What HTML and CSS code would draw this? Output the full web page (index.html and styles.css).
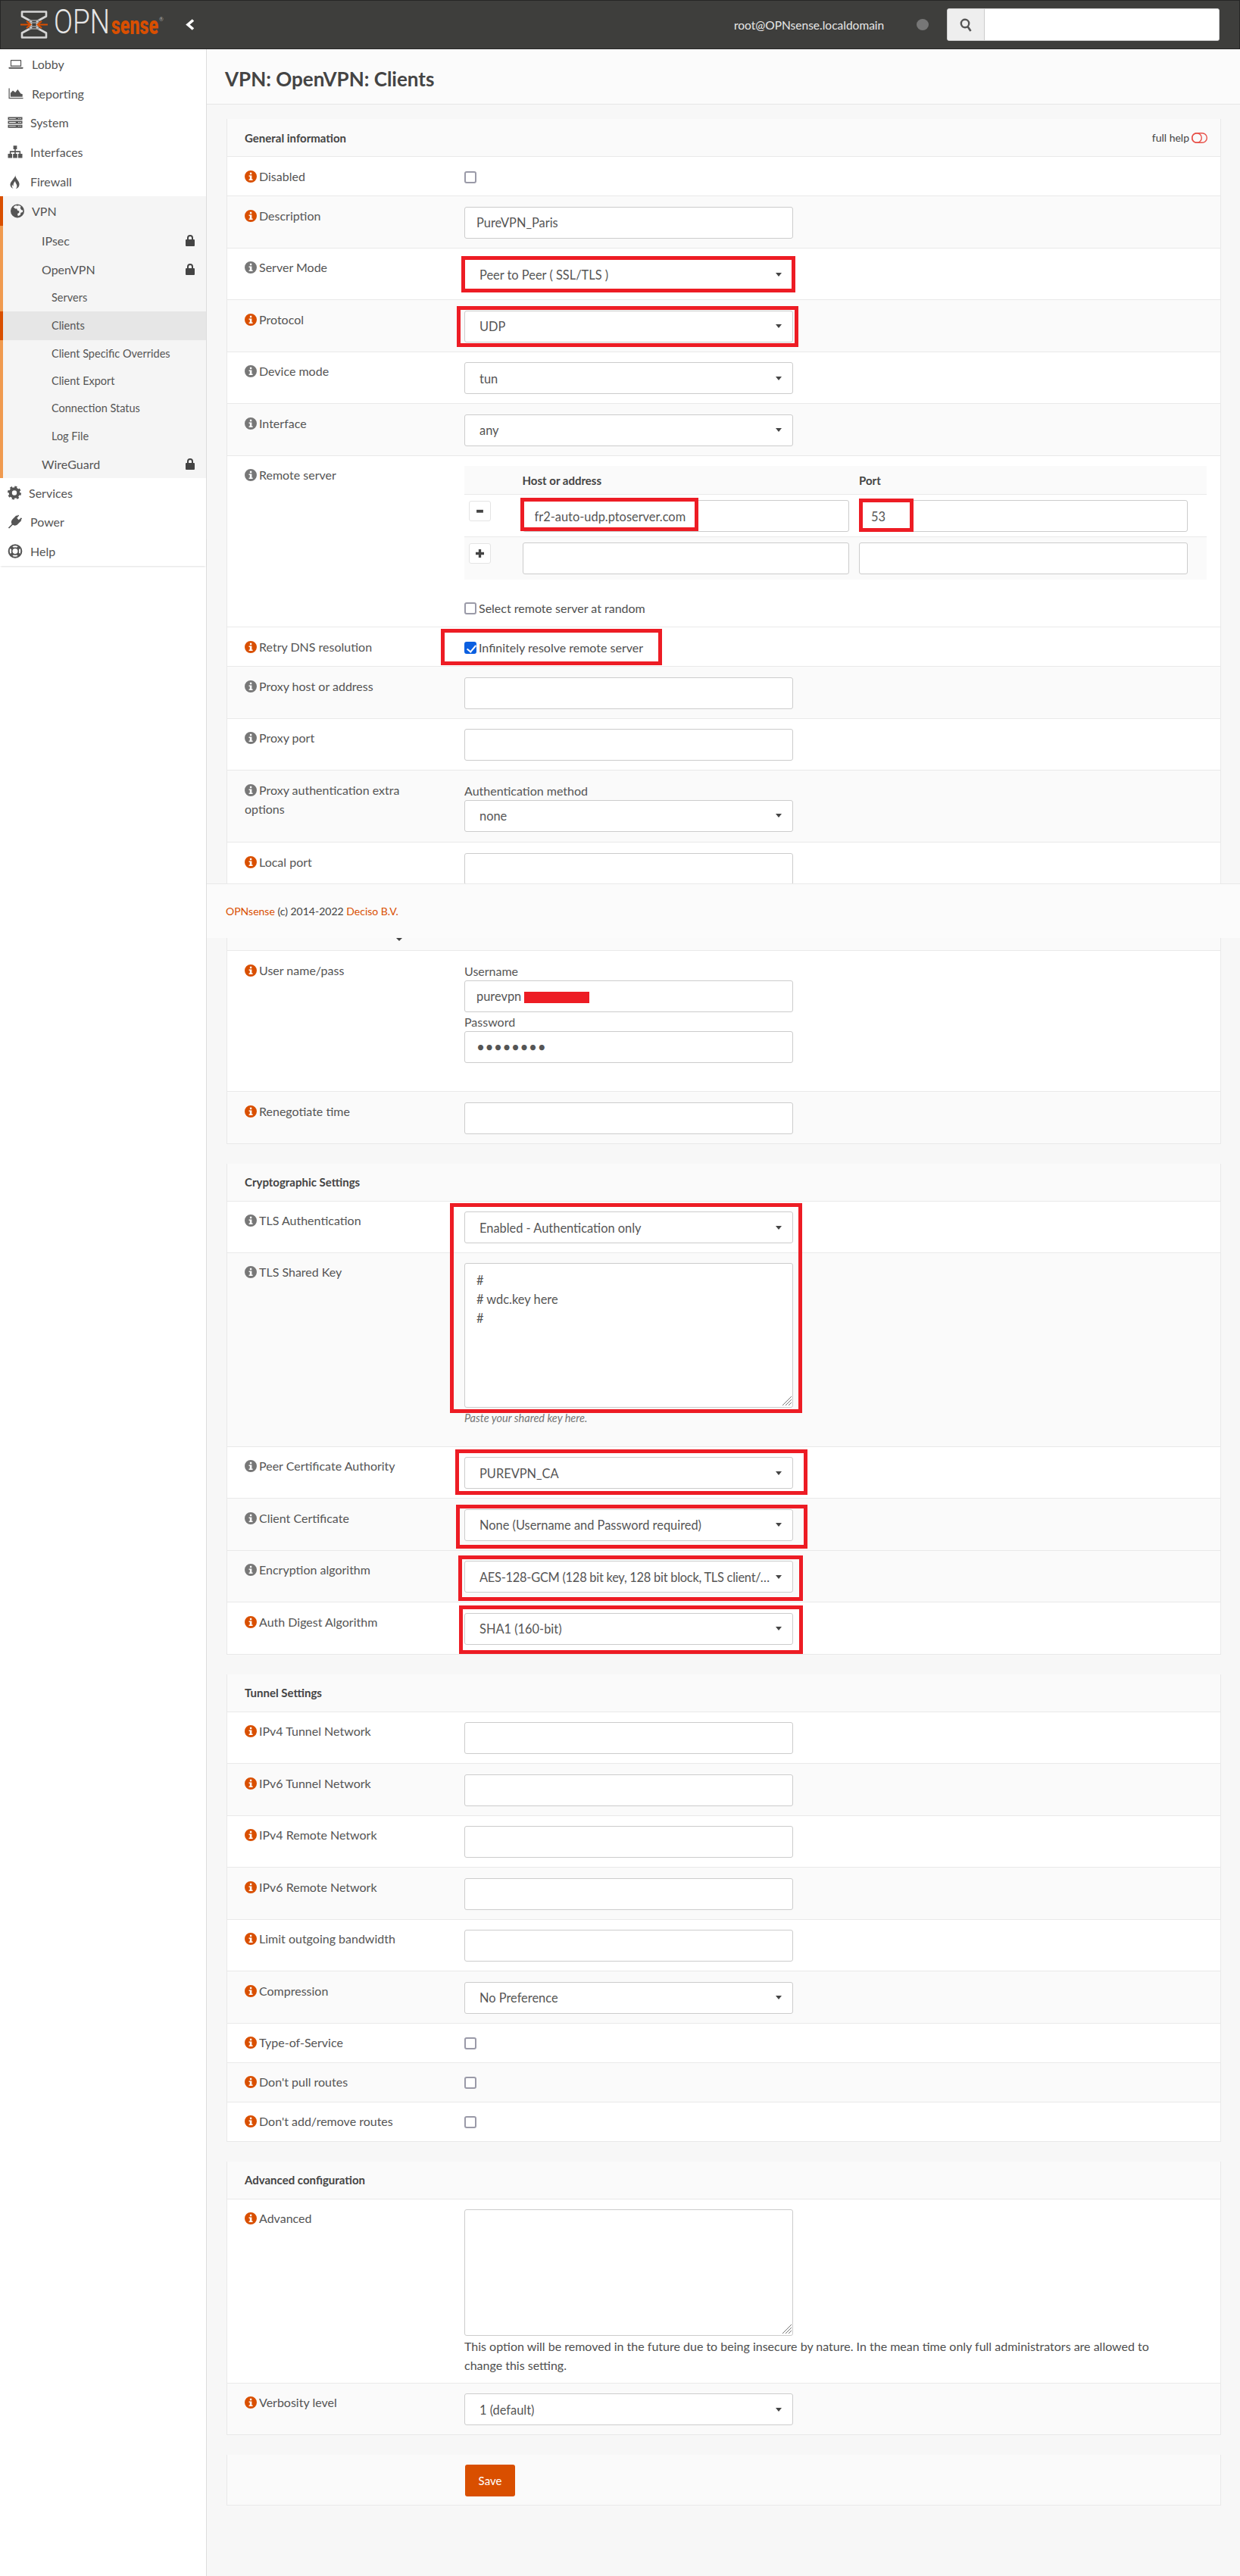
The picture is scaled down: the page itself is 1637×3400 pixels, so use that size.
FILE: index.html
```html
<!DOCTYPE html>
<html lang="en">
<head>
    <meta charset="UTF-8">
    <title>VPN: OpenVPN: Clients | OPNsense</title>
    <link rel="stylesheet" href="styles.css">
</head>
<body>
    <svg class="defs" aria-hidden="true">
        <symbol id="i-info" viewBox="0 0 16 16">
            <path fill-rule="evenodd" d="M8 0a8 8 0 1 1 0 16A8 8 0 0 1 8 0zM6.900 2.800v2.500h2.400V2.800zM5.600 6.400v1.500h1.200v3.600H5.600V13h5v-1.500H9.400V6.400z"/>
        </symbol>
        <symbol id="i-lock" viewBox="0 0 12 15">
            <path fill-rule="evenodd" d="M1 6h1V4a4 4 0 0 1 8 0v2h1a1 1 0 0 1 1 1v7a1 1 0 0 1-1 1H1a1 1 0 0 1-1-1V7a1 1 0 0 1 1-1zm3 0h4V4a2 2 0 0 0-4 0z"/>
        </symbol>
        <symbol id="i-resize" viewBox="0 0 12 12">
            <path d="M0 12 12 0M4 12l8-8M8 12l4-4" fill="none" stroke="#777" stroke-width="1"/>
        </symbol>
    </svg>

    <header class="topbar">
        <a class="logo" href="#">
            <svg class="logo-mark" viewBox="0 0 36 37">
                <path d="M2 1.500h32v6L22 14v9l12 6.500v6H2v-6L14 23v-9L2 7.500z" fill="none" stroke="#d6d6d6" stroke-width="2.600" stroke-linejoin="round"/>
                <path d="M11 13h14M11 16h14M11 21h14M11 24h14" stroke="#9a9a9a" stroke-width="1.600"/>
                <path d="M0 18.500h13M36 18.500H23M8 14l5.500 4.500L8 23M28 14l-5.500 4.500L28 23" fill="none" stroke="#d94f00" stroke-width="2"/>
            </svg>
            <svg class="logo-type" viewBox="0 -8 150 60">
                <text class="logo-opn" x="0" y="33" textLength="74" lengthAdjust="spacingAndGlyphs">OPN</text>
                <text class="logo-sense" x="76" y="34" textLength="62" lengthAdjust="spacingAndGlyphs">sense</text>
                <text class="logo-reg" x="139" y="17">®</text>
            </svg>
        </a>
        <svg class="collapse" viewBox="0 0 12 15"><path d="M10 1.500 3 7.500l7 6" fill="none" stroke="#fff" stroke-width="3.600"/></svg>
        <div class="topbar-right">
            <span class="user">root@OPNsense.localdomain</span>
            <span class="status-dot"></span>
            <div class="search">
                <span class="search-addon">
                    <svg viewBox="0 0 16 18"><circle cx="7" cy="7" r="5.200" fill="none" stroke="#555" stroke-width="2.400"/><path d="m10.500 11 4 6" stroke="#555" stroke-width="2.600"/></svg>
                </span>
                <input class="search-input" type="text">
            </div>
        </div>
    </header>

    <div class="layout">
        <nav class="sidebar">
            <a class="nav-item" href="#">
                <svg class="nav-icon wide" viewBox="0 0 24 24"><path fill-rule="evenodd" d="M4 5h16a1 1 0 0 1 1 1v10H3V6a1 1 0 0 1 1-1zm.500 1.500v8h15v-8zM0 17.500h24V19a1 1 0 0 1-1 1H1a1 1 0 0 1-1-1z"/></svg>
                Lobby
            </a>
            <a class="nav-item" href="#">
                <svg class="nav-icon wide" viewBox="0 0 24 24"><path d="M0 3h1.500v16H24v1.500H0zM3 17.500V11l4-4 4 3 4-5 5 7 3 1v4.500z"/></svg>
                Reporting
            </a>
            <a class="nav-item" href="#">
                <svg class="nav-icon" viewBox="0 0 24 24"><path fill-rule="evenodd" d="M0 3h24v5H0zm0 6.500h24v5H0zM0 16h24v5H0zM2 5v1h11V5zm15 0v1h2V5zm3 0v1h2V5zM2 11.500v1h11v-1zm15 0v1h2v-1zm3 0v1h2v-1zM2 18v1h11v-1zm15 0v1h2v-1zm3 0v1h2v-1z"/></svg>
                System
            </a>
            <a class="nav-item" href="#">
                <svg class="nav-icon" viewBox="0 0 24 24"><path d="M9 1.500h6v6h-2v3h8v5h-2v-3h-6v3h-2v-3H5v3H3v-5h8v-3H9zM0 15h7v7H0zm8.500 0h7v7h-7zM17 15h7v7h-7z"/></svg>
                Interfaces
            </a>
            <a class="nav-item" href="#">
                <svg class="nav-icon" viewBox="0 0 24 24"><path d="M12 0c1 4-2 6-4 9-2 3-5 5-4 10 .500 2.500 2.500 4 5 5-2-2-3-4-2-7 .500 2 1.500 2.500 2 2.500-.500-3 1-6 3-8 0 3 3 5 3 8 0 2-1 4-2 5 3-1 6-3 6-8 0-6-6-8-7-16z"/></svg>
                Firewall
            </a>
            <div class="nav-group">
                <a class="nav-item open" href="#">
                    <svg class="nav-icon narrow" viewBox="0 0 24 24"><path fill-rule="evenodd" d="M12 0a12 12 0 1 1 0 24 12 12 0 0 1 0-24zM5 5l3 3h3l1 3 3 1v3l-3 2 1 4 4-2 1-4 3-1 1-3-3-1-2-3 1-3-3-2-3 1-3-1z"/></svg>
                    VPN
                </a>
                <a class="nav-sub" href="#">IPsec <svg class="lock"><use href="#i-lock"/></svg></a>
                <a class="nav-sub" href="#">OpenVPN <svg class="lock"><use href="#i-lock"/></svg></a>
                <a class="nav-leaf" href="#">Servers</a>
                <a class="nav-leaf active" href="#">Clients</a>
                <a class="nav-leaf" href="#">Client Specific Overrides</a>
                <a class="nav-leaf" href="#">Client Export</a>
                <a class="nav-leaf" href="#">Connection Status</a>
                <a class="nav-leaf last" href="#">Log File</a>
                <a class="nav-sub last" href="#">WireGuard <svg class="lock"><use href="#i-lock"/></svg></a>
            </div>
            <a class="nav-item" href="#">
                <svg class="nav-icon narrow" viewBox="0 0 24 24"><circle cx="12" cy="12" r="7" fill="none" stroke="currentColor" stroke-width="5.500"/><circle cx="12" cy="12" r="10.500" fill="none" stroke="currentColor" stroke-width="3" stroke-dasharray="4.200 4.050"/></svg>
                Services
            </a>
            <a class="nav-item" href="#">
                <svg class="nav-icon" viewBox="0 0 24 24"><path d="M15 2.500 17 .5l1.500 1.500-3.500 4 3 3 4-3.500L23.500 7l-2 2 1 1-6 6c-3 3-6 3-8.500 1.500L2 23.500.5 22l6-6C5 13.500 5 10.500 8 7.500l6-6z"/></svg>
                Power
            </a>
            <a class="nav-item help" href="#">
                <svg class="nav-icon" viewBox="0 0 24 24"><circle cx="12" cy="12" r="10.500" fill="none" stroke="currentColor" stroke-width="2.600"/><circle cx="12" cy="12" r="5.500" fill="none" stroke="currentColor" stroke-width="2.200"/><path d="m4.500 4.500 4 4m7 7 4 4m0-15-4 4m-7 7-4 4" stroke="currentColor" stroke-width="5"/></svg>
                Help
            </a>
        </nav>

        <main class="main">
            <div class="page-title"><h1>VPN: OpenVPN: Clients</h1></div>

            <section class="panel first">
                <div class="panel-head">
                    General information
                    <span class="full-help">full help
                        <svg viewBox="0 0 21 14"><rect x=".7" y=".7" width="19.600" height="12.600" rx="6.300" fill="none" stroke="#e8524a" stroke-width="1.400"/><circle cx="7" cy="7" r="6.300" fill="none" stroke="#e8524a" stroke-width="1.400"/></svg>
                    </span>
                </div>
                <div class="row check-row">
                    <div class="lbl"><svg class="info warn"><use href="#i-info"/></svg>Disabled</div>
                    <div class="val"><input class="check" type="checkbox"></div>
                </div>
                <div class="row alt">
                    <div class="lbl"><svg class="info warn"><use href="#i-info"/></svg>Description</div>
                    <div class="val"><input class="text" type="text" value="PureVPN_Paris"></div>
                </div>
                <div class="row">
                    <div class="lbl"><svg class="info"><use href="#i-info"/></svg>Server Mode</div>
                    <div class="val"><div class="select"><span>Peer to Peer ( SSL/TLS )</span><i class="caret"></i></div></div>
                </div>
                <div class="row alt">
                    <div class="lbl"><svg class="info warn"><use href="#i-info"/></svg>Protocol</div>
                    <div class="val"><div class="select"><span>UDP</span><i class="caret"></i></div></div>
                </div>
                <div class="row">
                    <div class="lbl"><svg class="info"><use href="#i-info"/></svg>Device mode</div>
                    <div class="val"><div class="select"><span>tun</span><i class="caret"></i></div></div>
                </div>
                <div class="row alt">
                    <div class="lbl"><svg class="info"><use href="#i-info"/></svg>Interface</div>
                    <div class="val"><div class="select"><span>any</span><i class="caret"></i></div></div>
                </div>
                <div class="row remote-row">
                    <div class="lbl"><svg class="info"><use href="#i-info"/></svg>Remote server</div>
                    <div class="val wide">
                        <div class="remote-head"><span class="col-host">Host or address</span><span class="col-port">Port</span></div>
                        <div class="remote-line">
                            <button class="mini" type="button"><svg viewBox="0 0 10 10"><rect x="1" y="3.500" width="8" height="3.500"/></svg></button>
                            <input class="text host" type="text" value="fr2-auto-udp.ptoserver.com">
                            <input class="text port" type="text" value="53">
                        </div>
                        <div class="remote-line alt">
                            <button class="mini" type="button"><svg viewBox="0 0 10 10"><path d="M3.500 0h3v3.500H10v3H6.500V10h-3V6.500H0v-3h3.500z"/></svg></button>
                            <input class="text host" type="text">
                            <input class="text port" type="text">
                        </div>
                        <label class="check-label random"><input class="check" type="checkbox">Select remote server at random</label>
                    </div>
                </div>
                <div class="row check-row">
                    <div class="lbl"><svg class="info warn"><use href="#i-info"/></svg>Retry DNS resolution</div>
                    <div class="val"><label class="check-label"><input class="check" type="checkbox" checked>Infinitely resolve remote server</label></div>
                </div>
                <div class="row alt">
                    <div class="lbl"><svg class="info"><use href="#i-info"/></svg>Proxy host or address</div>
                    <div class="val"><input class="text" type="text"></div>
                </div>
                <div class="row">
                    <div class="lbl"><svg class="info"><use href="#i-info"/></svg>Proxy port</div>
                    <div class="val"><input class="text" type="text"></div>
                </div>
                <div class="row alt proxy-row">
                    <div class="lbl"><svg class="info"><use href="#i-info"/></svg>Proxy authentication extra options</div>
                    <div class="val">
                        <div class="field-title">Authentication method</div>
                        <div class="select"><span>none</span><i class="caret"></i></div>
                    </div>
                </div>
                <div class="row">
                    <div class="lbl"><svg class="info warn"><use href="#i-info"/></svg>Local port</div>
                    <div class="val"><input class="text" type="text"></div>
                </div>
                <div class="row alt hidden-row"><i class="peek"></i></div>
                <div class="row user-row">
                    <div class="lbl"><svg class="info warn"><use href="#i-info"/></svg>User name/pass</div>
                    <div class="val">
                        <div class="field-title">Username</div>
                        <input class="text" type="text" value="purevpn">
                        <div class="field-title second">Password</div>
                        <input class="text secret" type="password" value="password">
                    </div>
                </div>
                <div class="row alt">
                    <div class="lbl"><svg class="info warn"><use href="#i-info"/></svg>Renegotiate time</div>
                    <div class="val"><input class="text" type="text"></div>
                </div>
            </section>

            <section class="panel">
                <div class="panel-head">Cryptographic Settings</div>
                <div class="row tls-row">
                    <div class="lbl"><svg class="info"><use href="#i-info"/></svg>TLS Authentication</div>
                    <div class="val"><div class="select"><span>Enabled - Authentication only</span><i class="caret"></i></div></div>
                </div>
                <div class="row alt key-row">
                    <div class="lbl"><svg class="info"><use href="#i-info"/></svg>TLS Shared Key</div>
                    <div class="val">
                        <div class="area-wrap">
                            <textarea class="area key"># 
# wdc.key here
# </textarea>
                            <svg class="resizer"><use href="#i-resize"/></svg>
                        </div>
                        <div class="hint">Paste your shared key here.</div>
                    </div>
                </div>
                <div class="row">
                    <div class="lbl"><svg class="info"><use href="#i-info"/></svg>Peer Certificate Authority</div>
                    <div class="val"><div class="select"><span>PUREVPN_CA</span><i class="caret"></i></div></div>
                </div>
                <div class="row alt">
                    <div class="lbl"><svg class="info"><use href="#i-info"/></svg>Client Certificate</div>
                    <div class="val"><div class="select"><span>None (Username and Password required)</span><i class="caret"></i></div></div>
                </div>
                <div class="row alt">
                    <div class="lbl"><svg class="info"><use href="#i-info"/></svg>Encryption algorithm</div>
                    <div class="val"><div class="select tight"><span>AES-128-GCM (128 bit key, 128 bit block, TLS client/server)</span><i class="caret"></i></div></div>
                </div>
                <div class="row">
                    <div class="lbl"><svg class="info warn"><use href="#i-info"/></svg>Auth Digest Algorithm</div>
                    <div class="val"><div class="select"><span>SHA1 (160-bit)</span><i class="caret"></i></div></div>
                </div>
            </section>

            <section class="panel">
                <div class="panel-head">Tunnel Settings</div>
                <div class="row">
                    <div class="lbl"><svg class="info warn"><use href="#i-info"/></svg>IPv4 Tunnel Network</div>
                    <div class="val"><input class="text" type="text"></div>
                </div>
                <div class="row alt">
                    <div class="lbl"><svg class="info warn"><use href="#i-info"/></svg>IPv6 Tunnel Network</div>
                    <div class="val"><input class="text" type="text"></div>
                </div>
                <div class="row">
                    <div class="lbl"><svg class="info warn"><use href="#i-info"/></svg>IPv4 Remote Network</div>
                    <div class="val"><input class="text" type="text"></div>
                </div>
                <div class="row alt">
                    <div class="lbl"><svg class="info warn"><use href="#i-info"/></svg>IPv6 Remote Network</div>
                    <div class="val"><input class="text" type="text"></div>
                </div>
                <div class="row">
                    <div class="lbl"><svg class="info warn"><use href="#i-info"/></svg>Limit outgoing bandwidth</div>
                    <div class="val"><input class="text" type="text"></div>
                </div>
                <div class="row alt">
                    <div class="lbl"><svg class="info warn"><use href="#i-info"/></svg>Compression</div>
                    <div class="val"><div class="select"><span>No Preference</span><i class="caret"></i></div></div>
                </div>
                <div class="row check-row">
                    <div class="lbl"><svg class="info warn"><use href="#i-info"/></svg>Type-of-Service</div>
                    <div class="val"><input class="check" type="checkbox"></div>
                </div>
                <div class="row check-row alt">
                    <div class="lbl"><svg class="info warn"><use href="#i-info"/></svg>Don't pull routes</div>
                    <div class="val"><input class="check" type="checkbox"></div>
                </div>
                <div class="row check-row">
                    <div class="lbl"><svg class="info warn"><use href="#i-info"/></svg>Don't add/remove routes</div>
                    <div class="val"><input class="check" type="checkbox"></div>
                </div>
            </section>

            <section class="panel">
                <div class="panel-head">Advanced configuration</div>
                <div class="row advanced-row">
                    <div class="lbl"><svg class="info warn"><use href="#i-info"/></svg>Advanced</div>
                    <div class="val wide">
                        <div class="area-wrap">
                            <textarea class="area tall"></textarea>
                            <svg class="resizer"><use href="#i-resize"/></svg>
                        </div>
                        <p class="note">This option will be removed in the future due to being insecure by nature. In the mean time only full administrators are allowed to change this setting.</p>
                    </div>
                </div>
                <div class="row alt">
                    <div class="lbl"><svg class="info warn"><use href="#i-info"/></svg>Verbosity level</div>
                    <div class="val"><div class="select"><span>1 (default)</span><i class="caret"></i></div></div>
                </div>
            </section>

            <section class="panel save-panel">
                <button class="save" type="button">Save</button>
            </section>
        </main>
    </div>

    <footer class="page-footer"><a href="#">OPNsense</a> (c) 2014-2022 <a href="#">Deciso B.V.</a></footer>

    <!-- hand drawn red marks over the screenshot -->
    <div class="mark mark-mode"></div>
    <div class="mark mark-proto"></div>
    <div class="mark mark-host"></div>
    <div class="mark mark-port"></div>
    <div class="mark mark-retry"></div>
    <div class="mark mark-tls"></div>
    <div class="mark mark-peer"></div>
    <div class="mark mark-client"></div>
    <div class="mark mark-enc"></div>
    <div class="mark mark-auth"></div>
    <div class="redact"></div>
</body>
</html>
```

FILE: styles.css
```css
* {
    box-sizing: border-box;
}
body {
    margin: 0;
    min-height: 3400px;
    background-color: #f7f7f7;
    color: #4f4f4f;
    font-family: "Lato", "Noto Sans", sans-serif;
    font-size: 16px;
}
a {
    color: inherit;
    text-decoration: none;
}
.defs {
    display: none;
}

/* top bar */
.topbar {
    display: flex;
    align-items: center;
    height: 65px;
    padding: 0 26px 0 26px;
    background-color: #3e3e3c;
    border: 1px solid #262626;
}
.logo {
    display: flex;
    align-items: center;
    gap: 8px;
    width: 218px;
}
.logo-mark {
    width: 36px;
    height: 37px;
}
.logo-type {
    width: 150px;
    height: 60px;
    overflow: visible;
}
.logo-opn {
    font-family: "Roboto", sans-serif;
    font-weight: 300;
    font-size: 45px;
    fill: #e6e6e6;
}
.logo-sense {
    font-family: "Roboto", sans-serif;
    font-weight: 900;
    font-size: 33px;
    fill: #d94f00;
}
.logo-reg {
    font-size: 7px;
    fill: #aaa;
}
.collapse {
    width: 12px;
    height: 15px;
}
.topbar-right {
    display: flex;
    align-items: center;
    margin-left: auto;
}
.user {
    width: 216px;
    color: #e8e8e8;
    font-size: 15.5px;
    white-space: nowrap;
}
.status-dot {
    width: 16px;
    height: 15px;
    margin: 0 24px 0 25px;
    border-radius: 50%;
    background-color: #777;
}
.search {
    display: flex;
    width: 360px;
    height: 43px;
    background: #fff;
    border: 1px solid #ccc;
    border-radius: 3px;
    overflow: hidden;
}
.search-addon {
    display: flex;
    align-items: center;
    justify-content: center;
    width: 49px;
    background-color: #eee;
    border-right: 1px solid #ccc;
}
.search-addon svg {
    width: 16px;
    height: 18px;
}
.search-input {
    flex: 1;
    border: 0;
    min-width: 0;
}

/* sidebar */
.layout {
    display: flex;
    align-items: stretch;
    min-height: 3335px;
}
.sidebar {
    flex: none;
    width: 273px;
    background-color: #fff;
    border-right: 1px solid #ddd;
    color: #555;
}
.nav-item {
    display: flex;
    align-items: center;
    height: 38.8px;
    padding-left: 10px;
    font-size: 16px;
}
.nav-icon {
    flex: none;
    width: 20px;
    height: 19px;
    margin-right: 10px;
    fill: currentColor;
}
.nav-icon.wide {
    width: 22px;
}
.nav-icon.narrow {
    width: 18px;
    margin-right: 10px;
}
.nav-group {
    background-color: #f5f5f5;
    border-left: 4px solid #f09a4f;
}
.nav-item.open {
    margin-left: -4px;
    border-left: 4px solid #d94f00;
    padding-left: 10px;
}
.nav-sub {
    display: flex;
    align-items: center;
    justify-content: space-between;
    height: 38.5px;
    padding: 0 15px 0 51px;
}
.nav-sub.last {
    height: 37px;
}
.lock {
    width: 12px;
    height: 15px;
    fill: #444;
}
.nav-leaf {
    display: flex;
    align-items: center;
    height: 36px;
    padding-left: 64px;
    font-size: 14.5px;
}
.nav-leaf.active {
    height: 38px;
    margin-left: -4px;
    background-color: #e6e6e6;
    border-left: 4px solid #d94f00;
}
.nav-leaf.last {
    height: 37px;
}
.nav-item.help {
    height: 39px;
    box-shadow: 0 2px 2px -1px rgba(0, 0, 0, 0.12);
}

/* page */
.main {
    flex: 1;
    min-width: 0;
}
.page-title {
    display: flex;
    align-items: center;
    height: 73px;
    padding: 6px 0 0 24px;
    background-color: #fbfbfb;
    border-bottom: 1px solid #e6e6e6;
}
.page-title h1 {
    margin: 0;
    color: #444;
    font-size: 26px;
    font-weight: 700;
}
.panel {
    margin: 26px 25px 0 26px;
    background-color: #fff;
    border: 1px solid #e9e9e9;
    border-width: 0 1px;
}
.panel.first {
    margin-top: 19px;
}
.panel-head {
    display: flex;
    align-items: center;
    justify-content: space-between;
    height: 50px;
    padding: 0 17px 0 23px;
    background-color: #fafafa;
    border-bottom: 1px solid #e9e9e9;
    color: #444;
    font-size: 15px;
    font-weight: 700;
}
.full-help {
    display: flex;
    align-items: center;
    gap: 3px;
    font-size: 14px;
    font-weight: 400;
}
.full-help svg {
    width: 21px;
    height: 14px;
}

/* form rows */
.row {
    position: relative;
    display: flex;
    align-items: flex-start;
    height: 68.5px;
    padding: 13.5px 0 0 23px;
    background-color: #fff;
    border-bottom: 1px solid #e9e9e9;
}
.row.alt {
    background-color: #fafafa;
}
.check-row {
    height: 52px;
}
.remote-row {
    height: 226.5px;
}
.proxy-row {
    height: 95px;
}
.hidden-row {
    height: 74.5px;
}
.user-row {
    height: 186px;
}
.tls-row {
    height: 68px;
}
.key-row {
    height: 256px;
}
.advanced-row {
    height: 243px;
    padding-top: 13px;
}
.lbl {
    flex: none;
    width: 290px;
    margin-top: -1px;
    padding-right: 30px;
    line-height: 25px;
    color: #555;
}
.info {
    width: 16px;
    height: 16px;
    margin-right: 3px;
    vertical-align: -2px;
    fill: #777;
}
.info.warn {
    fill: #d94f00;
}
.val {
    width: 434px;
}
.val.wide {
    width: 980px;
}
.text,
.select,
.area {
    display: block;
    width: 434px;
    background-color: #fff;
    border: 1px solid #ccc;
    border-radius: 3px;
    color: #555;
    font-family: inherit;
    font-size: 16.4px;
}
.text {
    height: 42px;
    padding: 0 15px;
}
.select {
    display: flex;
    align-items: center;
    justify-content: space-between;
    gap: 2px;
    height: 42px;
    padding: 0 14px 0 19px;
}
.select.tight {
    letter-spacing: -0.25px;
}
.select span {
    overflow: hidden;
    text-overflow: ellipsis;
    white-space: nowrap;
}
.caret {
    flex: none;
    width: 0;
    height: 0;
    border-top: 5px solid #444;
    border-left: 4px solid transparent;
    border-right: 4px solid transparent;
}
.secret {
    font-size: 19px;
    letter-spacing: 0.5px;
}
.check {
    -webkit-appearance: none;
    appearance: none;
    position: relative;
    display: block;
    flex: none;
    width: 16px;
    height: 16px;
    margin: 5px 0 0;
    background: #fff;
    border: 2px solid #9a9aa8;
    border-radius: 3px;
}
.check:checked {
    background: #0b5fe0;
    border-color: #0b5fe0;
}
.check:checked::after {
    content: "";
    position: absolute;
    left: 3.5px;
    top: 0;
    width: 5px;
    height: 10px;
    border: solid #fff;
    border-width: 0 2px 2px 0;
    transform: rotate(40deg);
}
.check-label {
    display: flex;
    align-items: center;
    gap: 3px;
    line-height: 26px;
}
.check-label .check {
    margin: 0;
}
.field-title {
    height: 25px;
    line-height: 25px;
    color: #555;
}
.peek {
    position: absolute;
    top: 57px;
    left: 223px;
    width: 0;
    height: 0;
    border-top: 4px solid #444;
    border-left: 4px solid transparent;
    border-right: 4px solid transparent;
}

/* remote server table */
.remote-head {
    display: flex;
    align-items: center;
    height: 38px;
    padding-left: 76.5px;
    background-color: #fafafa;
    border-bottom: 1px solid #e9e9e9;
    color: #444;
    font-weight: 700;
    font-size: 15px;
}
.col-host {
    width: 444.5px;
}
.remote-line {
    display: flex;
    align-items: flex-start;
    height: 56px;
    padding: 7px 0 0 6px;
    border-bottom: 1px solid #e9e9e9;
}
.remote-line.alt {
    background-color: #fafafa;
    border-bottom: 0;
}
.mini {
    display: flex;
    align-items: center;
    justify-content: center;
    width: 29px;
    height: 27px;
    margin: 1px 41.5px 0 0;
    padding: 0;
    background: #fff;
    border: 1px solid #e4e4e4;
    border-radius: 3px;
}
.mini svg {
    width: 11px;
    height: 11px;
    fill: #444;
}
.text.host {
    width: 431.5px;
    margin-right: 13px;
}
.text.port {
    width: 433.5px;
}
.random {
    margin-top: 25px;
}

/* text areas */
.area-wrap {
    position: relative;
    width: 434px;
}
.area {
    resize: none;
    padding: 9px 15px;
    line-height: 25px;
    overflow: hidden;
}
.area.key {
    height: 191px;
}
.area.tall {
    height: 167px;
}
.resizer {
    position: absolute;
    right: 2px;
    bottom: 3px;
    width: 12px;
    height: 12px;
}
.hint {
    margin-top: 5px;
    color: #777;
    font-size: 14.5px;
    font-style: italic;
}
.note {
    max-width: 945px;
    margin: 0;
    padding-top: 1px;
    line-height: 25px;
}

/* save */
.panel.save-panel {
    height: 67px;
    padding: 12.5px 0 0 314px;
    background-color: #fafafa;
    border-bottom: 1px solid #e9e9e9;
}
.save {
    width: 66px;
    height: 42px;
    background-color: #d94f00;
    border: 0;
    border-radius: 3px;
    color: #fff;
    font-family: inherit;
    font-size: 15px;
}

/* footer sits over the form */
.page-footer {
    position: absolute;
    top: 1166px;
    left: 273px;
    right: 0;
    height: 72px;
    padding: 27px 0 0 25px;
    background-color: #fbfbfb;
    border-top: 1px solid #e9e9e9;
    font-size: 14px;
    color: #444;
}
.page-footer a {
    color: #d94f00;
}

/* red marks */
.mark {
    position: absolute;
    border: 5px solid #ed1c24;
}
.mark-mode { left: 609px; top: 338px; width: 441px; height: 48px; }
.mark-proto { left: 603px; top: 404px; width: 451px; height: 54px; }
.mark-host { left: 687px; top: 657px; width: 235px; height: 44px; }
.mark-port { left: 1134px; top: 658px; width: 72px; height: 44px; }
.mark-retry { left: 582px; top: 830px; width: 292px; height: 48px; }
.mark-tls { left: 594px; top: 1588px; width: 465px; height: 277px; }
.mark-peer { left: 601px; top: 1913px; width: 465px; height: 60px; }
.mark-client { left: 602px; top: 1986px; width: 464px; height: 58px; }
.mark-enc { left: 605px; top: 2053px; width: 455px; height: 60px; }
.mark-auth { left: 606px; top: 2119px; width: 454px; height: 64px; }
.redact {
    position: absolute;
    left: 692px;
    top: 1309px;
    width: 86px;
    height: 15px;
    background-color: #ed1c24;
}
```
